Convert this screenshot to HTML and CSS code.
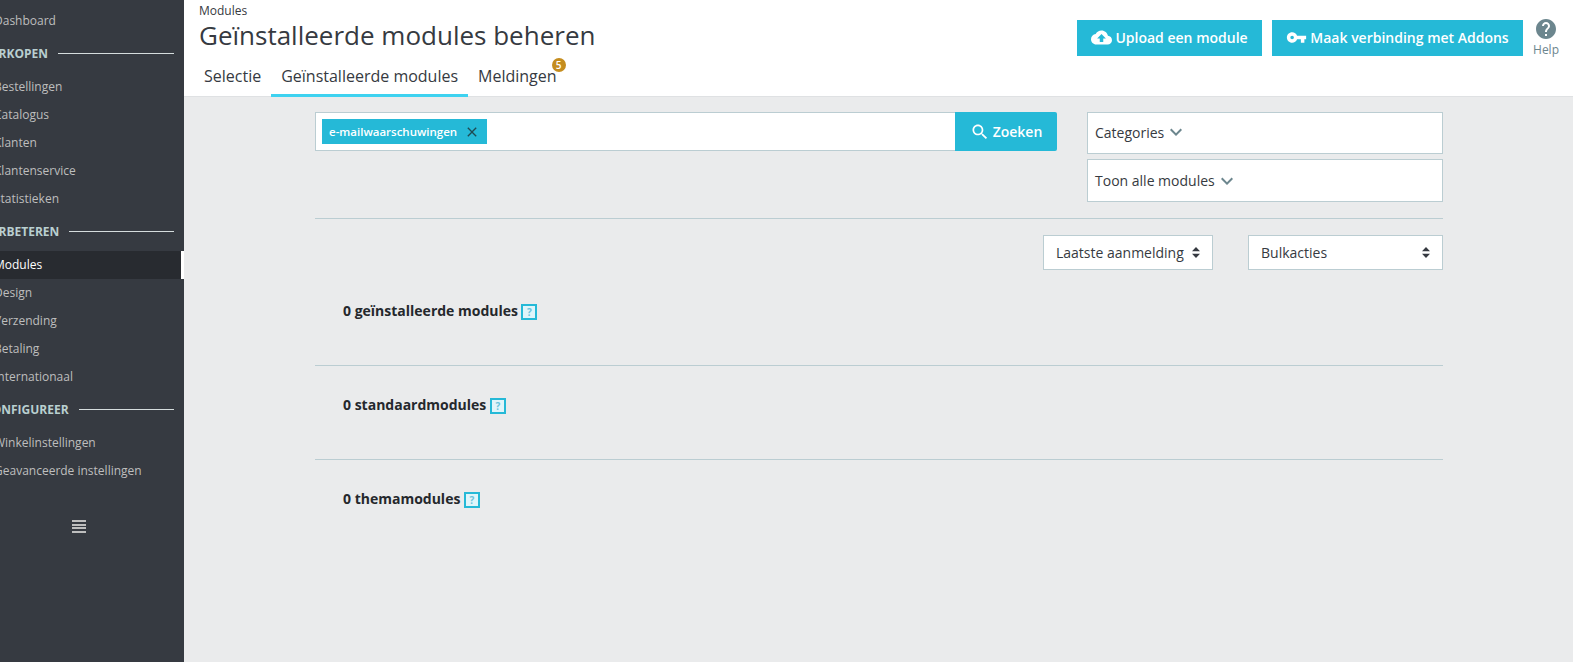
FILE: index.html
```html
<!DOCTYPE html>
<html lang="nl">
<head>
<meta charset="utf-8">
<title>Geïnstalleerde modules beheren</title>
<link rel="stylesheet" href="styles.css">
</head>
<body>
<div class="app">
  <nav class="sidebar">
    <div class="nav-inner">
      <a class="nav-item first">Dashboard</a>
      <div class="nav-head"><span>VERKOPEN</span><i></i></div>
      <a class="nav-item">Bestellingen</a>
      <a class="nav-item">Catalogus</a>
      <a class="nav-item">Klanten</a>
      <a class="nav-item">Klantenservice</a>
      <a class="nav-item">Statistieken</a>
      <div class="nav-head"><span>VERBETEREN</span><i></i></div>
      <a class="nav-item active">Modules</a>
      <a class="nav-item">Design</a>
      <a class="nav-item">Verzending</a>
      <a class="nav-item">Betaling</a>
      <a class="nav-item">Internationaal</a>
      <div class="nav-head"><span>CONFIGUREER</span><i></i></div>
      <a class="nav-item">Winkelinstellingen</a>
      <a class="nav-item">Geavanceerde instellingen</a>
    </div>
    <div class="burger"><i></i><i></i><i></i><i></i></div>
  </nav>
  <main class="main">
    <header class="topbar">
      <div class="top-left">
        <div class="crumb">Modules</div>
        <h1 class="title">Geïnstalleerde modules beheren</h1>
        <div class="tabs">
          <a class="tab">Selectie</a>
          <a class="tab on">Geïnstalleerde modules</a>
          <a class="tab notif">Meldingen<span class="badge">5</span></a>
        </div>
      </div>
      <div class="top-actions">
        <button class="btn btn-upload"><svg class="ic cloud" viewBox="0 0 24 24"><path d="M19.35 10.04C18.67 6.59 15.64 4 12 4 9.11 4 6.6 5.64 5.35 8.04 2.34 8.36 0 10.91 0 14c0 3.31 2.69 6 6 6h13c2.76 0 5-2.24 5-5 0-2.64-2.05-4.78-4.65-4.96zM14 13v4h-4v-4H7l5-5 5 5h-3z"/></svg>Upload een module</button>
        <button class="btn btn-addons"><svg class="ic key" viewBox="0 0 24 24"><path d="M12.65 10C11.83 7.67 9.61 6 7 6c-3.31 0-6 2.69-6 6s2.69 6 6 6c2.61 0 4.83-1.67 5.65-4H17v4h4v-4h2v-4H12.65zM7 14c-1.1 0-2-.9-2-2s.9-2 2-2 2 .9 2 2-.9 2-2 2z"/></svg>Maak verbinding met Addons</button>
        <div class="help"><svg class="help-ic" viewBox="2 2 20 20"><path d="M12 2C6.48 2 2 6.48 2 12s4.48 10 10 10 10-4.48 10-10S17.52 2 12 2zm1 17h-2v-2h2v2zm2.07-7.75l-.9.92C13.45 12.9 13 13.5 13 15h-2v-.5c0-1.1.45-2.1 1.17-2.83l1.24-1.26c.37-.36.59-.86.59-1.41 0-1.1-.9-2-2-2s-2 .9-2 2H8c0-2.21 1.79-4 4-4s4 1.79 4 4c0 .88-.36 1.68-.93 2.25z"/></svg><span>Help</span></div>
      </div>
    </header>
    <section class="content">
      <div class="filters">
        <div class="search">
          <div class="search-field">
            <span class="chip">e-mailwaarschuwingen<svg class="chip-x" viewBox="0 0 24 24"><path d="M19 6.41L17.59 5 12 10.59 6.41 5 5 6.41 10.59 12 5 17.59 6.41 19 12 13.41 17.59 19 19 17.59 13.41 12z"/></svg></span>
          </div>
          <button class="search-btn"><svg class="ic search-ic" viewBox="0 0 24 24"><path d="M15.5 14h-.79l-.28-.27C15.41 12.59 16 11.11 16 9.5 16 5.91 13.09 3 9.5 3S3 5.91 3 9.5 5.91 16 9.5 16c1.61 0 3.09-.59 4.23-1.57l.27.28v.79l5 4.99L20.49 19l-4.99-5zm-6 0C7.01 14 5 11.99 5 9.5S7.01 5 9.5 5 14 7.01 14 9.5 11.99 14 9.5 14z"/></svg>Zoeken</button>
        </div>
        <div class="drops">
          <div class="drop cat">Categories<svg class="chev" viewBox="0 0 24 24"><path d="M16.59 8.59L12 13.17 7.41 8.59 6 10l6 6 6-6z"/></svg></div>
          <div class="drop all">Toon alle modules<svg class="chev" viewBox="0 0 24 24"><path d="M16.59 8.59L12 13.17 7.41 8.59 6 10l6 6 6-6z"/></svg></div>
        </div>
      </div>
      <div class="sorts">
        <div class="sel sort">Laatste aanmelding<svg class="carets" viewBox="0 0 8 11"><path d="M4 0l4 4.2H0zM4 11L0 6.8h8z"/></svg></div>
        <div class="sel bulk">Bulkacties<svg class="carets" viewBox="0 0 8 11"><path d="M4 0l4 4.2H0zM4 11L0 6.8h8z"/></svg></div>
      </div>
      <div class="group"><h2 class="group-title">0 geïnstalleerde modules<span class="hint">?</span></h2></div>
      <div class="group"><h2 class="group-title">0 standaardmodules<span class="hint">?</span></h2></div>
      <div class="group last"><h2 class="group-title">0 themamodules<span class="hint">?</span></h2></div>
    </section>
  </main>
</div>
</body>
</html>
```

FILE: styles.css
```css
* { box-sizing: border-box; }
html, body { margin: 0; height: 100%; }
body { font-family: "Open Sans", sans-serif; color: #363a41; background: #eaebec; overflow: hidden; }
.app { display: flex; height: 662px; }

.sidebar { width: 184px; flex: none; background: #363a41; overflow: hidden; padding-top: 7px; }
.nav-inner { margin-left: -16px; }
.nav-item { display: flex; align-items: center; height: 28px; padding: 0 0 2px 10px; font-size: 12px; color: #bebebe; }
.nav-item.active { background: #282b30; color: #fff; border-right: 3px solid #fff; }
.nav-head { display: flex; align-items: center; height: 38px; padding: 0 10px 2px 0; font-size: 12px; font-weight: 700; color: #bebebe; }
.nav-head span { color: #b9cfd0; }
.nav-head i { flex: 1; height: 1px; background: #d5dcdd; margin-left: 10px; }
.burger { width: 14px; height: 13px; margin: 35px 0 0 72px; display: flex; flex-direction: column; justify-content: space-between; }
.burger i { height: 2px; background: #bebebe; }

.main { flex: 1; min-width: 0; display: flex; flex-direction: column; }
.topbar { height: 97px; flex: none; background: #fff; border-bottom: 1px solid #dfe1e3; display: flex; justify-content: space-between; padding-left: 15px; }
.top-left { display: flex; flex-direction: column; }
.crumb { font-size: 12px; line-height: 14px; margin-top: 4px; color: #363a41; }
.title { margin: 0; font-size: 26px; font-weight: 400; line-height: 34px; color: #363a41; }
.tabs { display: flex; margin-top: 7px; margin-left: -5px; }
.tab { display: block; height: 38px; padding: 0 10px; font-size: 16px; line-height: 34px; color: #363a41; border-bottom: 3px solid transparent; }
.tab.on { border-bottom-color: #3ed2f0; }
.notif { position: relative; }
.badge { position: absolute; top: -1px; right: 1px; width: 14px; height: 14px; border-radius: 50%; background: #c58d1e; color: #fff; font-size: 10px; font-weight: 600; line-height: 14px; text-align: center; }

.top-actions { display: flex; align-items: flex-start; padding-top: 20px; gap: 10px; margin-right: 14px; }
.btn { display: flex; align-items: center; justify-content: center; height: 36px; padding: 0 0 1px; border: 0; background: #25b9d7; color: #fff; font-family: inherit; font-size: 14px; font-weight: 600; }
.btn-upload { width: 185px; }
.btn-addons { width: 251px; }
.ic { fill: #fff; flex: none; }
.cloud { width: 21px; height: 21px; margin-right: 3px; }
.key { width: 21px; height: 21px; margin-right: 3px; }
.help { display: flex; flex-direction: column; align-items: center; margin-top: -1px; font-size: 12px; color: #6c868e; }
.help-ic { width: 20px; height: 20px; fill: #6c868e; }
.help span { line-height: 16px; margin-top: 3px; }

.content { flex: 1; padding: 15px 130px 0 131px; }
.filters { display: flex; justify-content: space-between; align-items: flex-start; }
.search { display: flex; width: 742px; height: 39px; }
.search-field { flex: 1; background: #fff; border: 1px solid #bbcdd2; border-right: 0; padding: 6px; }
.chip { display: inline-flex; align-items: center; width: 165px; height: 25px; padding: 0 7px; background: #25b9d7; color: #fff; font-size: 11.5px; font-weight: 600; }
.chip-x { width: 16px; height: 16px; margin-left: auto; fill: #1f4a52; }
.search-btn { display: flex; align-items: center; justify-content: center; width: 102px; border: 0; background: #25b9d7; color: #fff; font-family: inherit; font-size: 14px; font-weight: 600; border-radius: 0 2px 2px 0; }
.search-ic { width: 20px; height: 20px; margin-right: 3px; }
.drops { width: 356px; display: flex; flex-direction: column; gap: 5px; }
.drop { display: flex; align-items: center; background: #fff; border: 1px solid #bbcdd2; padding-left: 7px; font-size: 14px; color: #363a41; }
.drop.cat { height: 42px; padding-bottom: 2px; }
.drop.all { height: 43px; }
.chev { width: 24px; height: 24px; margin-left: 0; fill: #6c868e; }

.sorts { margin-top: 16px; border-top: 1px solid #bbcdd2; padding-top: 16px; display: flex; justify-content: flex-end; gap: 35px; }
.sel { display: flex; align-items: center; justify-content: space-between; height: 35px; background: #fff; border: 1px solid #bbcdd2; padding: 0 12px; font-size: 14px; color: #363a41; }
.sort { width: 170px; }
.bulk { width: 195px; }
.carets { width: 8px; height: 11px; fill: #363a41; }

.group { height: 94px; border-bottom: 1px solid #bbcdd2; padding: 29px 0 0 28px; }
.sorts + .group { height: 96px; padding-top: 31px; }
.group.last { border-bottom: 0; }
.group-title { margin: 0; display: flex; align-items: center; font-size: 14px; font-weight: 700; line-height: 20px; color: #25282c; }
.hint { width: 16px; height: 16px; margin: 2px 0 0 3.5px; border: 2px solid #25b9d7; background: #e0f5fa; color: #6cc4dc; font-size: 10px; font-weight: 700; line-height: 12px; text-align: center; }
```
